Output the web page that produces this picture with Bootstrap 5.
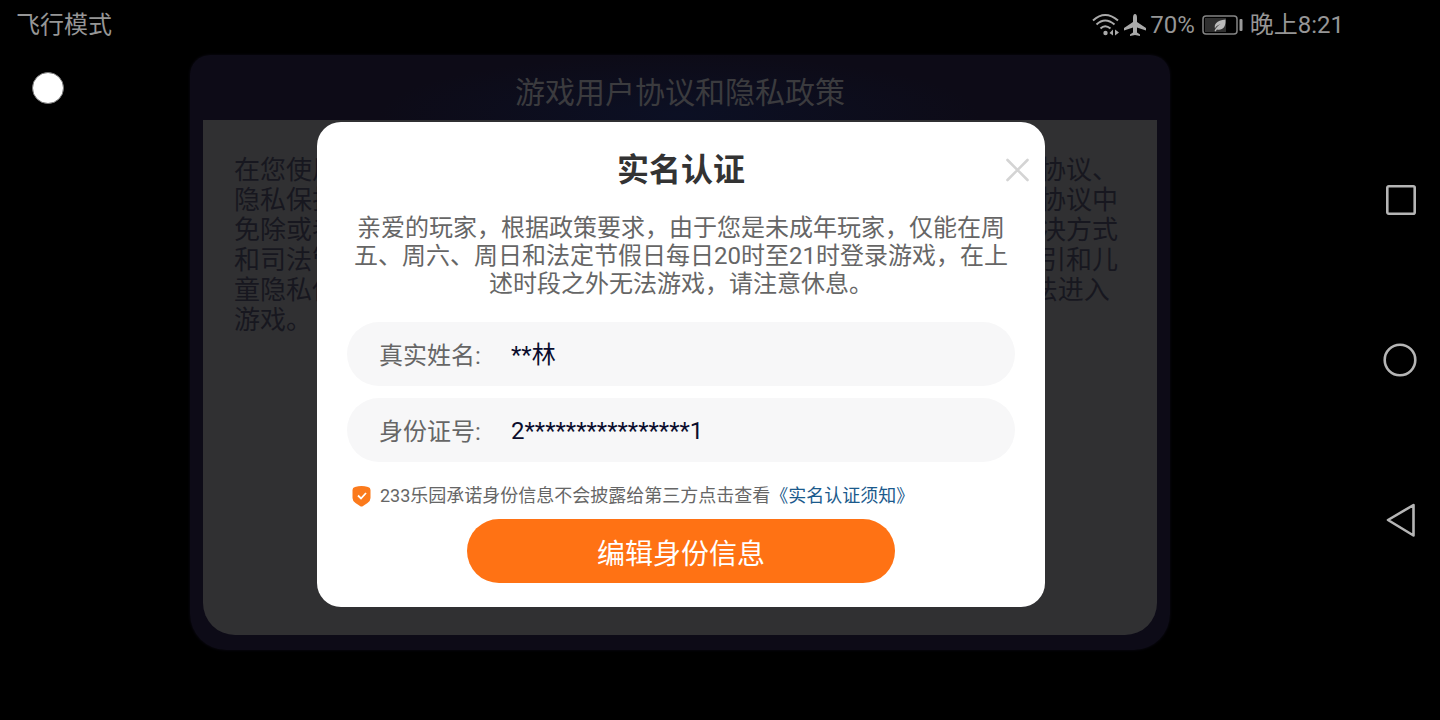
<!DOCTYPE html>
<html lang="zh-CN">
<head>
<meta charset="utf-8">
<meta name="viewport" content="width=device-width, initial-scale=1">
<title>实名认证</title>
<link rel="stylesheet" href="https://cdn.jsdelivr.net/npm/bootstrap@5.3.0/dist/css/bootstrap.min.css">
<style>
  body { background: #000; color: #999; font-family: Roboto, "Noto Sans CJK SC", sans-serif; font-size: 24px; font-weight: 390; line-height: 28px; }
  .status-bar { height: 50px; padding: 0 16px; color: #969696; }
  .battery { margin: 0 7px; }
  .float-dot { top: 72px; left: 32px; width: 32px; height: 32px; background: #fff; border: 1px solid #777; }
  .policy-panel { width: 980px; max-width: 100%; height: 595px; margin-top: 5px; padding: 0 13px 15px; background: radial-gradient(ellipse 300px 60px at 50% 60px, #0c1024, #0d0b17); border-radius: 20px 20px 36px 36px; box-shadow: 0 0 3px #0d0b17; }
  .policy-title { height: 65px; padding-top: 10px; font-size: 30px; font-weight: 390; line-height: 56px; color: #3b3b3e; }
  .policy-body { padding: 35px 29px 35px 31px; font-size: 26px; line-height: 30px; background: #303032; color: #17171f; border-radius: 0 0 32px 32px; }
  .overlay { padding-top: 122px; }
  .auth-dialog { width: 728px; max-width: 100%; margin-left: 2px; padding: 26px 30px 24px; background: #fff; border-radius: 24px; color: #666; }
  .auth-title { font-size: 32px; line-height: 44px; font-weight: 700; color: #333; }
  .close-btn { top: 32px; right: 12px; width: 32px; height: 32px; }
  .auth-text { margin: 22px 0 24px; }
  .auth-field { height: 64px; padding: 2px 32px 0; background: #f7f7f8; border-radius: 32px; margin-bottom: 12px; }
  .auth-field label { width: 132px; padding-top: 1px; }
  .auth-field input { color: #0b0d2d; outline: 0; font-weight: 390; }
  .pledge { font-size: 18px; line-height: 24px; margin: 22px 0 11px; padding-left: 5px; gap: 9px; }
  .pledge a { color: #1b5a8c; }
  .edit-btn { width: 428px; max-width: 100%; height: 64px; border-radius: 32px; background: #ff7214; color: #fff; font-size: 28px; font-weight: 390; line-height: 32px; padding: 7px 0 0; }
  .nav-keys { width: 80px; padding-top: 184px; gap: 128px; }
  .nav-keys button { width: 32px; height: 32px; }
  svg { display: block; flex: none; }
</style>
</head>
<body>
<div class="d-flex min-vh-100">
  <div class="position-relative flex-grow-1">
    <header class="status-bar d-flex align-items-center justify-content-between">
      <span>飞行模式</span>
      <div class="d-flex align-items-center">
        <svg width="28" height="24" viewBox="0 0 28 24" fill="none" stroke="#aaa" stroke-width="2" aria-hidden="true">
          <path d="M1 7.500Q13 -3.500 26 7.500M4.500 11.500Q13 3.500 22.500 11.500M8.500 15.500Q13 11 18.500 15.500"/>
          <circle cx="13.500" cy="20" r="2.200" fill="#aaa" stroke="none"/>
          <path d="M17.500 20l3.500-3.500v6zM27 19.500l-4-3v6z" fill="#aaa" stroke="none"/>
        </svg>
        <svg class="ms-1 me-1" width="22" height="24" viewBox="0 0 22 24" fill="#aaa" aria-hidden="true"><path d="M11 1q2 0 2 4v4l9 6v2.500l-9-3v5l3 2v1.500l-5-1-5 1v-1.500l3-2v-5l-9 3V15l9-6V5q0-4 2-4z"/></svg>
        <span>70%</span>
        <svg class="battery" width="41" height="20" viewBox="0 0 41 20" aria-hidden="true">
          <rect x="1" y="1" width="34" height="18" rx="3" fill="#000" stroke="#858585" stroke-width="1.500"/>
          <rect x="3" y="3" width="21" height="14" fill="#303030"/>
          <path d="M12.500 16c1-3 3-5 6-7-3 1-5 3-5.500 4.500-1-4 1-8 10.500-9 .5 8-3 11-8.500 10l-1.500 2z" fill="#bbb"/>
          <rect x="37.500" y="4" width="3" height="12" rx="1" fill="#999"/>
        </svg>
        <span>晚上8:21</span>
      </div>
    </header>

    <div class="float-dot position-absolute rounded-circle"></div>

    <main class="policy-panel mx-auto d-flex flex-column">
      <h1 class="policy-title text-center mb-0">游戏用户协议和隐私政策</h1>
      <p class="policy-body flex-grow-1 mb-0">在您使用本游戏产品和服务之前请您务必审慎阅读并且充分理解本用户协议、隐私保护政策的各项条款，特别是与您自身权益密切相关的内容以及本协议中免除或者限制责任的条款、适用法律与管辖条款、以及双方间争议的解决方式和司法管辖等内容。同时请您仔细阅读平台个人信息保护规则、隐私指引和儿童隐私保护指引。如您不同意233平台的上述全部协议内容，您将会无法进入游戏。</p>
    </main>

    <div class="overlay position-absolute top-0 start-0 w-100 d-flex justify-content-center">
      <form class="auth-dialog position-relative" role="dialog" aria-labelledby="authTitle">
        <h2 id="authTitle" class="auth-title text-center mb-0">实名认证</h2>
        <button type="button" class="close-btn btn p-0 border-0 position-absolute" aria-label="关闭">
          <svg width="32" height="32" viewBox="0 0 32 32" stroke="#d4d4d4" stroke-width="2.600" stroke-linecap="round"><path d="M6.500 6l20 20M26.500 6l-20 20"/></svg>
        </button>
        <p class="auth-text text-center">亲爱的玩家，根据政策要求，由于您是未成年玩家，仅能在周五、周六、周日和法定节假日每日20时至21时登录游戏，在上述时段之外无法游戏，请注意休息。</p>
        <div class="auth-field d-flex align-items-center">
          <label for="realName">真实姓名:</label>
          <input id="realName" class="flex-grow-1 border-0 bg-transparent p-0" type="text" value="**林" readonly>
        </div>
        <div class="auth-field d-flex align-items-center">
          <label for="idNumber">身份证号:</label>
          <input id="idNumber" class="flex-grow-1 border-0 bg-transparent p-0" type="text" value="2****************1" readonly>
        </div>
        <div class="pledge d-flex align-items-center">
          <svg width="19" height="22" viewBox="0 0 19 22" aria-hidden="true"><path d="M3 2Q9.500 0 16 2q2.500 .5 2.500 3v8q0 3-3 5l-4.500 3q-1.500 1-3 0l-4.500-3Q.5 16 .5 13V5Q.5 2.500 3 2z" fill="#fb7a1c"/><path d="M6 10.500l3 3 5-5.500" fill="none" stroke="#fff" stroke-width="1.800"/></svg>
          <span>233乐园承诺身份信息不会披露给第三方点击查看<a class="text-decoration-none" href="#notice">《实名认证须知》</a></span>
        </div>
        <button type="button" class="edit-btn btn border-0 d-block mx-auto">编辑身份信息</button>
      </form>
    </div>
  </div>

  <nav class="nav-keys d-flex flex-column align-items-center flex-shrink-0" aria-label="系统导航">
    <button type="button" class="btn p-0 border-0" aria-label="最近任务"><svg width="32" height="32" viewBox="0 0 32 32" fill="none" stroke="#b5b5b5" stroke-width="2.600"><rect x="3.300" y="2.300" width="27.400" height="27.400" rx="1.500"/></svg></button>
    <button type="button" class="btn p-0 border-0" aria-label="主屏幕"><svg class="overflow-visible" width="32" height="32" viewBox="0 0 32 32" fill="none" stroke="#b5b5b5" stroke-width="2.600"><circle cx="16" cy="16" r="15.300"/></svg></button>
    <button type="button" class="btn p-0 border-0" aria-label="返回"><svg class="overflow-visible" width="32" height="32" viewBox="0 0 32 32" fill="none" stroke="#b5b5b5" stroke-width="2.600" stroke-linejoin="round"><path d="M4 16L29.500 1v30.500z"/></svg></button>
  </nav>
</div>
<script src="https://cdn.jsdelivr.net/npm/bootstrap@5.3.0/dist/js/bootstrap.bundle.min.js"></script>
</body>
</html>
